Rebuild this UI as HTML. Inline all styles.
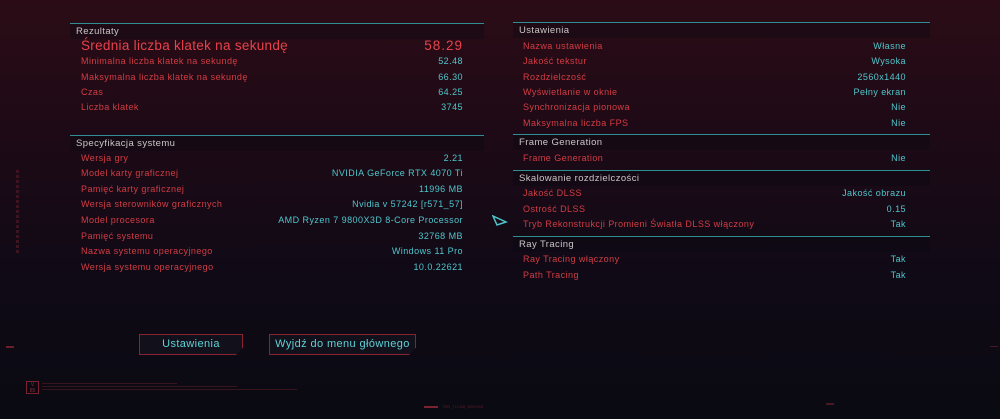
<!DOCTYPE html>
<html><head><meta charset="utf-8"><style>
*{margin:0;padding:0;box-sizing:border-box}
body{width:1000px;height:419px;overflow:hidden;position:relative;font-family:"Liberation Sans","DejaVu Sans",sans-serif;
background:linear-gradient(180deg,#2b0c16 0%,#1c0a16 35%,#100a16 65%,#0a0a12 100%);}
.line{position:absolute;height:1px;background:#2f8e94}
.hdr{position:absolute;height:15px;background:rgba(10,8,18,0.35);color:#c9c6c6;font-size:9.5px;line-height:15px;padding-left:6px;letter-spacing:0.4px}
.r{position:absolute;font-size:9px;color:#d33c44;height:12px;line-height:12px;letter-spacing:0.45px;white-space:nowrap}
.v{position:absolute;font-size:9px;color:#4fc6cc;text-align:right;height:12px;line-height:12px;white-space:nowrap;letter-spacing:0.45px}
.btn{position:absolute;height:21px;border:1px solid #8a2330;background:#12101a;color:#5fd2d8;font-size:11px;text-align:center;line-height:19px;letter-spacing:0.4px;clip-path:polygon(0 0,100% 0,100% 65%,calc(100% - 7px) 100%,0 100%)}
</style></head><body>
<div class="line" style="left:70px;top:23px;width:414px"></div>
<div class="hdr" style="left:70px;top:24px;width:414px">Rezultaty</div>
<div class="r" style="left:81px;top:38px;font-size:13.5px;height:16px;line-height:16px;color:#e8424c;letter-spacing:0.3px">Średnia liczba klatek na sekundę</div>
<div class="v" style="right:537px;top:38px;font-size:13.5px;height:16px;line-height:16px;color:#e8424c;letter-spacing:1px">58.29</div>
<div class="r" style="left:81px;top:55px">Minimalna liczba klatek na sekundę</div><div class="v" style="right:537px;top:55px">52.48</div>
<div class="r" style="left:81px;top:71px">Maksymalna liczba klatek na sekundę</div><div class="v" style="right:537px;top:71px">66.30</div>
<div class="r" style="left:81px;top:86px">Czas</div><div class="v" style="right:537px;top:86px">64.25</div>
<div class="r" style="left:81px;top:101px">Liczba klatek</div><div class="v" style="right:537px;top:101px">3745</div>

<div class="line" style="left:70px;top:135px;width:414px"></div>
<div class="hdr" style="left:70px;top:136px;width:414px">Specyfikacja systemu</div>
<div class="r" style="left:81px;top:152px">Wersja gry</div><div class="v" style="right:537px;top:152px">2.21</div>
<div class="r" style="left:81px;top:167px">Model karty graficznej</div><div class="v" style="right:537px;top:167px">NVIDIA GeForce RTX 4070 Ti</div>
<div class="r" style="left:81px;top:183px">Pamięć karty graficznej</div><div class="v" style="right:537px;top:183px">11996 MB</div>
<div class="r" style="left:81px;top:198px">Wersja sterowników graficznych</div><div class="v" style="right:537px;top:198px">Nvidia v 57242 [r571_57]</div>
<div class="r" style="left:81px;top:214px">Model procesora</div><div class="v" style="right:537px;top:214px">AMD Ryzen 7 9800X3D 8-Core Processor</div>
<div class="r" style="left:81px;top:230px">Pamięć systemu</div><div class="v" style="right:537px;top:230px">32768 MB</div>
<div class="r" style="left:81px;top:245px">Nazwa systemu operacyjnego</div><div class="v" style="right:537px;top:245px">Windows 11 Pro</div>
<div class="r" style="left:81px;top:261px">Wersja systemu operacyjnego</div><div class="v" style="right:537px;top:261px">10.0.22621</div>

<div class="line" style="left:513px;top:22px;width:417px"></div>
<div class="hdr" style="left:513px;top:23px;width:417px">Ustawienia</div>
<div class="r" style="left:523px;top:40px">Nazwa ustawienia</div><div class="v" style="right:94px;top:40px">Własne</div>
<div class="r" style="left:523px;top:55px">Jakość tekstur</div><div class="v" style="right:94px;top:55px">Wysoka</div>
<div class="r" style="left:523px;top:71px">Rozdzielczość</div><div class="v" style="right:94px;top:71px">2560x1440</div>
<div class="r" style="left:523px;top:86px">Wyświetlanie w oknie</div><div class="v" style="right:94px;top:86px">Pełny ekran</div>
<div class="r" style="left:523px;top:101px">Synchronizacja pionowa</div><div class="v" style="right:94px;top:101px">Nie</div>
<div class="r" style="left:523px;top:117px">Maksymalna liczba FPS</div><div class="v" style="right:94px;top:117px">Nie</div>
<div class="line" style="left:513px;top:134px;width:417px"></div>
<div class="hdr" style="left:513px;top:135px;width:417px">Frame Generation</div>
<div class="r" style="left:523px;top:152px">Frame Generation</div><div class="v" style="right:94px;top:152px">Nie</div>
<div class="line" style="left:513px;top:170px;width:417px"></div>
<div class="hdr" style="left:513px;top:171px;width:417px">Skalowanie rozdzielczości</div>
<div class="r" style="left:523px;top:187px">Jakość DLSS</div><div class="v" style="right:94px;top:187px">Jakość obrazu</div>
<div class="r" style="left:523px;top:203px">Ostrość DLSS</div><div class="v" style="right:94px;top:203px">0.15</div>
<div class="r" style="left:523px;top:218px">Tryb Rekonstrukcji Promieni Światła DLSS włączony</div><div class="v" style="right:94px;top:218px">Tak</div>
<div class="line" style="left:513px;top:236px;width:417px"></div>
<div class="hdr" style="left:513px;top:237px;width:417px">Ray Tracing</div>
<div class="r" style="left:523px;top:253px">Ray Tracing włączony</div><div class="v" style="right:94px;top:253px">Tak</div>
<div class="r" style="left:523px;top:269px">Path Tracing</div><div class="v" style="right:94px;top:269px">Tak</div>

<svg style="position:absolute;left:492px;top:215px" width="16" height="12"><path d="M1 1 L14 7 L5 10 Z" fill="none" stroke="#4fc6cc" stroke-width="1.5"/></svg>

<div class="btn" style="left:139px;top:334px;width:104px">Ustawienia</div>
<div class="btn" style="left:269px;top:334px;width:147px">Wyjdź do menu głównego</div>

<div style="position:absolute;left:16px;top:170px;width:3px;height:85px;background:repeating-linear-gradient(180deg,#3e1420 0 3px,transparent 3px 5px)"></div>
<div style="position:absolute;left:6px;top:346px;width:8px;height:2px;background:#6a1e2a"></div>
<div style="position:absolute;left:26px;top:381px;width:13px;height:13px;border:1px solid #7a2230;color:#8a2a36;font-size:5px;line-height:6px;text-align:center">V<br>85</div>
<div style="position:absolute;left:42px;top:383px;width:135px;height:1px;background:#3a141c"></div>
<div style="position:absolute;left:42px;top:386px;width:195px;height:1px;background:#3a141c"></div>
<div style="position:absolute;left:42px;top:389px;width:255px;height:1px;background:#3a141c"></div>
<div style="position:absolute;left:424px;top:406px;width:14px;height:2px;background:#7a2230"></div>
<div style="position:absolute;left:442px;top:404px;color:#5a1c26;font-size:4px">TRN_TLCAB_8000095</div>
<div style="position:absolute;left:826px;top:403px;width:8px;height:2px;background:#4a1820"></div>
<div style="position:absolute;left:990px;top:346px;width:8px;height:1px;background:#4a1820"></div>
</body></html>
